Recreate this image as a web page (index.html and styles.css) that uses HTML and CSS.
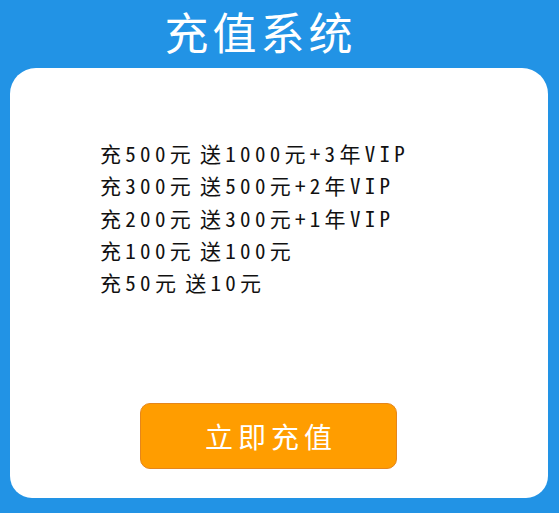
FILE: index.html
```html
<!DOCTYPE html>
<html lang="zh-CN">
<head>
<meta charset="utf-8">
<title>充值系统</title>
<link rel="stylesheet" href="styles.css">
</head>
<body>
<div class="page">
  <header class="header"><h1 class="title">充值系统</h1></header>
  <main class="card">
    <ul class="offers">
      <li>充500元<span class="gap"></span>送1000元+3年VIP</li>
      <li>充300元<span class="gap"></span>送500元+2年VIP</li>
      <li>充200元<span class="gap"></span>送300元+1年VIP</li>
      <li>充100元<span class="gap"></span>送100元</li>
      <li>充50元<span class="gap"></span>送10元</li>
    </ul>
    <button class="btn">立即充值</button>
  </main>
</div>
</body>
</html>
```
FILE: styles.css
```css
html, body {
  margin: 0;
  padding: 0;
  background: #2293e5;
}
.page {
  width: 559px;
  height: 513px;
  display: flex;
  flex-direction: column;
}
.header {
  height: 68px;
  display: flex;
  align-items: center;
  justify-content: center;
}
.title {
  margin: 0;
  color: #fff;
  font-family: "Noto Sans CJK SC", sans-serif;
  font-weight: 400;
  font-size: 44px;
  letter-spacing: 4px;
  line-height: 1;
  transform: translate(-19px, -3px);
}
.card {
  margin: 0 11px 15px 10px;
  height: 430px;
  background: #fff;
  border-radius: 26px 26px 22px 22px;
  box-sizing: border-box;
  padding: 69px 0 0 90px;
  display: flex;
  flex-direction: column;
}
.offers {
  list-style: none;
  margin: 0;
  padding: 0;
  font-family: "Noto Sans CJK SC", sans-serif;
  font-feature-settings: "hwid" 1;
  font-weight: 400;
  font-size: 21px;
  line-height: 32.3px;
  letter-spacing: 4.3px;
  color: #111;
  white-space: nowrap;
}
.gap {
  display: inline-block;
  width: 5px;
}
.btn {
  margin: 105px 0 0 40px;
  width: 257px;
  height: 66px;
  background: #ff9d00;
  border: 1px solid #e5861c;
  border-radius: 10px;
  color: #fff;
  font-family: "Noto Sans CJK SC", sans-serif;
  font-size: 28px;
  letter-spacing: 5px;
  padding: 0 0 0 5px;
  cursor: pointer;
}
```
